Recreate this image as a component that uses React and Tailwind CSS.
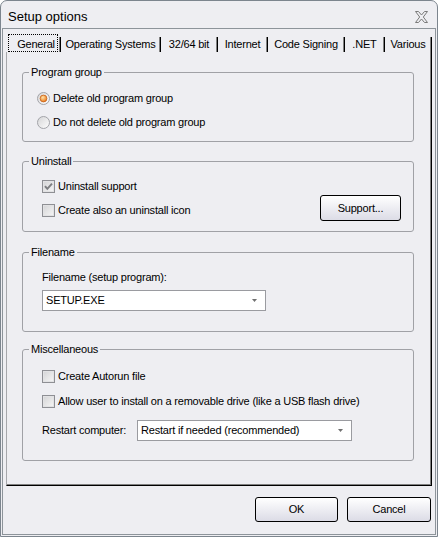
import React from 'react';

const BG = 'bg-[#eeeef2]';

const TABS = [
  { label: 'General', w: 'w-[55px]', active: true },
  { label: 'Operating Systems', w: 'w-[100px]' },
  { label: '32/64 bit', w: 'w-[57px]' },
  { label: 'Internet', w: 'w-[50px]' },
  { label: 'Code Signing', w: 'w-[77px]' },
  { label: '.NET', w: 'w-[40px]' },
  { label: 'Various', w: 'w-[47px]' },
];

function Radio({ on }) {
  return (
    <svg width="13" height="13" viewBox="0 0 13 13" className="shrink-0">
      <defs>
        <linearGradient id="rbg" x1="0" y1="0" x2="1" y2="1">
          <stop offset="0" stopColor="#d4d4d6" />
          <stop offset="1" stopColor="#ffffff" />
        </linearGradient>
        <radialGradient id="ron" cx="0.4" cy="0.35" r="0.65">
          <stop offset="0" stopColor="#ffe2a8" />
          <stop offset="1" stopColor="#ea7a1c" />
        </radialGradient>
      </defs>
      <circle cx="6.5" cy="6.5" r="6" fill="url(#rbg)" stroke="#a2a3a8" />
      {on && <circle cx="6.5" cy="6.5" r="3.4" fill="url(#ron)" stroke="#c7621a" strokeWidth="0.8" />}
    </svg>
  );
}

function Check({ on }) {
  return (
    <svg width="13" height="13" viewBox="0 0 13 13" className="shrink-0">
      <defs>
        <linearGradient id="cbg" x1="0" y1="0" x2="1" y2="1">
          <stop offset="0" stopColor="#d2d2d4" />
          <stop offset="1" stopColor="#f8f8f8" />
        </linearGradient>
      </defs>
      <rect x="0.5" y="0.5" width="12" height="12" fill="url(#cbg)" stroke="#8e8f94" />
      <rect x="1.5" y="1.5" width="10" height="10" fill="none" stroke="#e2e2e4" />
      {on && <path d="M3 6.2 L5.3 8.8 L10 3.6" stroke="#7d7e82" strokeWidth="2" fill="none" />}
    </svg>
  );
}

function Arrow() {
  return (
    <svg width="5" height="3" viewBox="0 0 5 3">
      <path d="M0 0 H5 L2.5 3 Z" fill="#707070" />
    </svg>
  );
}

function Select({ value, w }) {
  return (
    <div className={`flex h-[21px] items-center justify-between border border-[#9a9ba0] bg-white pl-[3px] pr-[8px] ${w}`}>
      <span>{value}</span>
      <Arrow />
    </div>
  );
}

// group box with the caption sitting on the top border
function Group({ label, className, children }) {
  return (
    <div className={`relative ml-[15px] w-[392px] shrink-0 rounded-[3px] border border-[#a0a1a6] ${className}`}>
      <span className={`absolute -top-[8px] left-[6px] px-[2px] leading-[14px] ${BG}`}>{label}</span>
      {children}
    </div>
  );
}

function Button({ children, w, h }) {
  return (
    <button
      className={`flex items-center justify-center rounded-[3px] border border-black bg-gradient-to-b from-white to-[#dcdce6] ${w} ${h}`}
    >
      {children}
    </button>
  );
}

export default function App() {
  return (
    <div
      className={`h-[537px] w-[438px] rounded-t-[7px] border border-[#7c858e] p-[1px] pt-0 text-[11px] tracking-[-0.2px] text-black ${BG}`}
      style={{ fontFamily: '"Liberation Sans", Arial, sans-serif' }}
    >
      {/* title bar */}
      <div className="flex h-[27px] items-center justify-between pl-[6px] pr-[8px] pt-[4px]">
        <span className="text-[13px] tracking-normal">Setup options</span>
        <svg width="13" height="12" viewBox="0 0 13 12">
          <path
            d="M0.5 0.5 H3.5 L6.5 4 L9.5 0.5 H12.5 L8.3 6 L12.5 11.5 H9.5 L6.5 8 L3.5 11.5 H0.5 L4.7 6 Z"
            fill="none"
            stroke="#7a7a7a"
          />
        </svg>
      </div>

      {/* client area */}
      <div className="h-[507px] border border-[#8d949a] px-[3px] pt-[5px]">
        {/* tabs */}
        <div className="flex h-[18px]">
          {TABS.map((t) => (
            <div key={t.label} className={`flex h-full ${t.w}`}>
              <div className="flex flex-1 items-center pl-[2px] pr-[1px]">
                {t.active ? (
                  <div className="flex h-[18px] w-full items-center justify-center border border-dotted border-black pt-[2px] pl-[6px]">
                    {t.label}
                  </div>
                ) : (
                  <div className="flex h-full w-full items-center justify-center pt-[3px]">{t.label}</div>
                )}
              </div>
              <div className="mt-[3px] flex h-[15px]">
                <div className="w-[1px] bg-[#808080]" />
                <div className="w-[1px] bg-black" />
              </div>
            </div>
          ))}
        </div>

        {/* tab page */}
        <div className="h-[434px] border-b border-r border-l border-b-black border-r-black border-l-[#a6a7ab]">
          <div className="flex h-full flex-col border-b border-r border-[#808080] pt-[20px]">
            <Group label="Program group" className="h-[70px]">
              <div className="flex flex-col gap-[8px] pl-[14px] pt-[17px]">
                <label className="flex h-[16px] items-center gap-[3px]">
                  <Radio on />
                  <span>Delete old program group</span>
                </label>
                <label className="flex h-[16px] items-center gap-[3px]">
                  <Radio />
                  <span>Do not delete old program group</span>
                </label>
              </div>
            </Group>

            <Group label="Uninstall" className="mt-[19px] h-[71px]">
              <div className="flex justify-between pl-[19px] pr-[12px] pt-[16px]">
                <div className="flex flex-col gap-[8px]">
                  <label className="flex h-[16px] items-center gap-[3px]">
                    <Check on />
                    <span>Uninstall support</span>
                  </label>
                  <label className="flex h-[16px] items-center gap-[3px]">
                    <Check />
                    <span>Create also an uninstall icon</span>
                  </label>
                </div>
                <div className="mt-[17px]">
                  <Button w="w-[81px]" h="h-[26px]">Support...</Button>
                </div>
              </div>
            </Group>

            <Group label="Filename" className="mt-[20px] h-[80px]">
              <div className="flex flex-col gap-[6px] pl-[19px] pt-[17px]">
                <div className="flex h-[14px] items-center">Filename (setup program):</div>
                <Select value="SETUP.EXE" w="w-[224px]" />
              </div>
            </Group>

            <Group label="Miscellaneous" className="mt-[17px] h-[112px]">
              <div className="flex flex-col pl-[19px] pt-[18px]">
                <label className="flex h-[16px] items-center gap-[3px]">
                  <Check />
                  <span>Create Autorun file</span>
                </label>
                <label className="mt-[9px] flex h-[16px] items-center gap-[3px]">
                  <Check />
                  <span>Allow user to install on a removable drive (like a USB flash drive)</span>
                </label>
                <div className="mt-[11px] flex items-center">
                  <span className="w-[95px]">Restart computer:</span>
                  <Select value="Restart if needed (recommended)" w="w-[215px]" />
                </div>
              </div>
            </Group>
          </div>
        </div>

        {/* dialog buttons */}
        <div className="mt-[11px] flex justify-end gap-[9px] pr-[1px]">
          <Button w="w-[83px]" h="h-[25px]">OK</Button>
          <Button w="w-[84px]" h="h-[25px]">Cancel</Button>
        </div>
      </div>
    </div>
  );
}
